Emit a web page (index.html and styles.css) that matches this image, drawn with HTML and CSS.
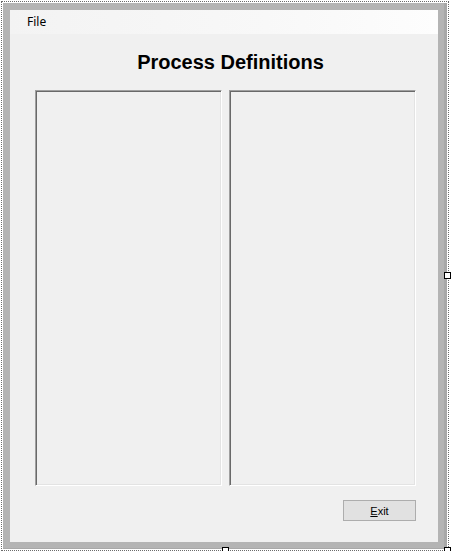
FILE: index.html
```html
<!DOCTYPE html>
<html>
<head>
<meta charset="utf-8">
<link rel="stylesheet" href="styles.css">
</head>
<body>
<div class="selection">
  <div class="frame">
    <div class="form">
      <div class="menubar"><span class="menu-item">File</span></div>
      <div class="title">Process Definitions</div>
      <div class="lists">
        <div class="listbox"></div>
        <div class="listbox"></div>
      </div>
      <div class="actions">
        <button class="btn"><u>E</u>xit</button>
      </div>
    </div>
  </div>
  <div class="handle handle-right"></div>
  <div class="handle handle-bottom"></div>
  <div class="handle handle-corner"></div>
</div>
</body>
</html>
```
FILE: styles.css
```css
html, body {
  margin: 0;
  padding: 0;
  background: #ffffff;
}

.selection {
  position: relative;
  margin: 1px 0 0 1px;
  width: 445px;
  height: 548px;
  border: 1px dotted #6a6a6a;
  padding: 1px;
  box-sizing: border-box;
  width: 448px;
  height: 550px;
}

.frame {
  width: 444px;
  height: 546px;
  box-sizing: border-box;
  background: #b4b4b4;
  padding: 7px 9px 7px 7px;
  box-shadow: inset -3px -1px 0 #a8a8a8;
}

.form {
  width: 428px;
  height: 532px;
  background: #f0f0f0;
  display: flex;
  flex-direction: column;
  font-family: "Liberation Sans", Arial, sans-serif;
  color: #000;
}

.menubar {
  height: 24px;
  background: linear-gradient(to right, #f3f3f3 0%, #f8f8f8 60%, #fdfdfd 100%);
  display: flex;
  align-items: center;
  padding-left: 17px;
}

.menu-item {
  font-family: "Noto Sans", "Open Sans", sans-serif;
  font-size: 12px;
  line-height: 16px;
}

.title {
  padding: 17px 0 16px 13px;
  text-align: center;
  font-weight: bold;
  font-size: 20px;
  line-height: 23px;
}

.lists {
  display: flex;
  gap: 7px;
  padding-left: 25px;
}

.listbox {
  width: 187px;
  height: 396px;
  box-sizing: border-box;
  background: #f0f0f0;
  border: 1px solid;
  border-color: #a0a0a0 #ffffff #ffffff #a0a0a0;
  box-shadow: inset 1px 1px 0 #696969, inset -1px -1px 0 #e3e3e3;
}

.actions {
  display: flex;
  justify-content: flex-end;
  padding: 14px 22px 0 0;
}

.btn {
  width: 73px;
  height: 21px;
  box-sizing: border-box;
  background: #e1e1e1;
  border: 1px solid #adadad;
  font-family: "Liberation Sans", Arial, sans-serif;
  font-size: 11px;
  color: #000;
  padding: 0;
  margin: 0;
}

.handle {
  position: absolute;
  width: 7px;
  height: 7px;
  box-sizing: border-box;
  background: #ffffff;
  border: 1px solid #000000;
}

.handle-right {
  left: 442px;
  top: 270px;
}

.handle-bottom {
  left: 220px;
  top: 545px;
}

.handle-corner {
  left: 442px;
  top: 545px;
}
```
